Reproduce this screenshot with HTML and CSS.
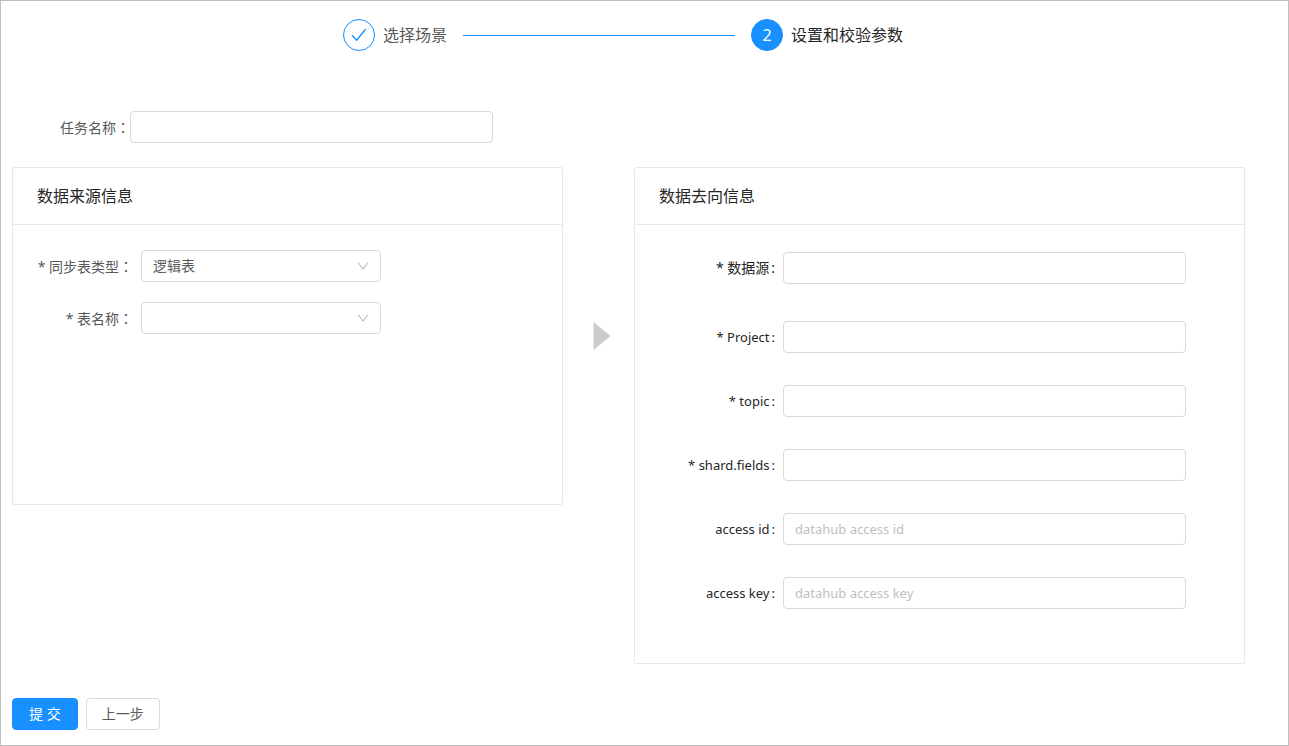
FILE: index.html
```html
<!DOCTYPE html>
<html lang="zh-CN">
<head>
  <meta charset="UTF-8">
  <meta name="viewport" content="width=device-width, initial-scale=1.0">
  <title>设置和校验参数</title>
  <link rel="stylesheet" href="styles.css">
</head>
<body>
  <main class="page">
    <!-- 步骤条 -->
    <ol class="steps">
      <li class="step done">
        <span class="step-icon">
          <svg width="16" height="16" viewBox="0 0 16 16" fill="none" stroke="currentColor" stroke-width="1.4" aria-hidden="true">
            <path d="M1 8.2 L5.6 13.2 L14.6 2.2"/>
          </svg>
        </span>
        <span>选择场景</span>
      </li>
      <li class="step-line" aria-hidden="true"></li>
      <li class="step active">
        <span class="step-icon">2</span>
        <span>设置和校验参数</span>
      </li>
    </ol>

    <form class="task-form">
      <div class="task-name">
        <label for="task-name">任务名称<span class="colon" lang="zh-TW">：</span></label>
        <input class="input" type="text" id="task-name">
      </div>

      <div class="panels">
        <!-- 数据来源 -->
        <section class="panel source">
          <h2>数据来源信息</h2>
          <div class="panel-body">
            <div class="field">
              <label for="table-type">* 同步表类型<span class="colon" lang="zh-TW">：</span></label>
              <div class="select">
                <select id="table-type">
                  <option>逻辑表</option>
                </select>
                <svg width="12" height="8" viewBox="0 0 12 8" fill="none" stroke="currentColor" stroke-width="1.2" aria-hidden="true">
                  <path d="M1 0.5 L6 7 L11 0.5"/>
                </svg>
              </div>
            </div>
            <div class="field">
              <label for="table-name">* 表名称<span class="colon" lang="zh-TW">：</span></label>
              <div class="select">
                <select id="table-name">
                  <option></option>
                </select>
                <svg width="12" height="8" viewBox="0 0 12 8" fill="none" stroke="currentColor" stroke-width="1.2" aria-hidden="true">
                  <path d="M1 0.5 L6 7 L11 0.5"/>
                </svg>
              </div>
            </div>
          </div>
        </section>

        <svg class="arrow" width="18" height="28" viewBox="0 0 18 28" aria-hidden="true">
          <path d="M0.5 0 L17.5 14 L0.5 28 Z" fill="#ccc"/>
        </svg>

        <!-- 数据去向 -->
        <section class="panel target">
          <h2>数据去向信息</h2>
          <div class="panel-body">
            <div class="field first">
              <label for="datasource">* 数据源<span class="mark">:</span></label>
              <input class="input" type="text" id="datasource">
            </div>
            <div class="field">
              <label for="project">* Project<span class="mark">:</span></label>
              <input class="input" type="text" id="project">
            </div>
            <div class="field">
              <label for="topic">* topic<span class="mark">:</span></label>
              <input class="input" type="text" id="topic">
            </div>
            <div class="field">
              <label for="shard-fields">* shard.fields<span class="mark">:</span></label>
              <input class="input" type="text" id="shard-fields">
            </div>
            <div class="field">
              <label for="access-id">access id<span class="mark">:</span></label>
              <input class="input" type="text" id="access-id" placeholder="datahub access id">
            </div>
            <div class="field">
              <label for="access-key">access key<span class="mark">:</span></label>
              <input class="input" type="text" id="access-key" placeholder="datahub access key">
            </div>
          </div>
        </section>
      </div>

      <div class="actions">
        <button class="btn primary" type="submit">提 交</button>
        <button class="btn" type="button">上一步</button>
      </div>
    </form>
  </main>
</body>
</html>
```
FILE: styles.css
```css
* {
  box-sizing: border-box;
}
body {
  margin: 0;
  font-family: "Noto Sans", "Noto Sans CJK SC", sans-serif;
  font-size: 14px;
  line-height: 22px;
  color: #595959;
  background: #fff;
}
input, select, button {
  font: inherit;
  color: inherit;
}
.page {
  min-height: 100vh;
  padding: 18px 43px 15px 0;
  border: 1px solid #bfbfbf;
}

/* 步骤条 */
.steps {
  display: flex;
  align-items: center;
  gap: 16px;
  max-width: 560px;
  margin: 0 auto;
  padding: 0;
  list-style: none;
  font-size: 16px;
}
.step {
  display: flex;
  align-items: center;
  gap: 8px;
  white-space: nowrap;
}
.step-icon {
  display: flex;
  align-items: center;
  justify-content: center;
  width: 32px;
  height: 32px;
  border: 1px solid #1890ff;
  border-radius: 50%;
  color: #1890ff;
}
.step.active {
  color: #262626;
}
.step.active .step-icon {
  background: #1890ff;
  color: #fff;
}
.step-line {
  flex: 1;
  height: 1px;
  background: #1890ff;
}

/* 表单 */
.task-form {
  padding: 60px 0 0 11px;
}
.input,
.select select {
  width: 100%;
  height: 32px;
  padding: 4px 11px;
  border: 1px solid #d9d9d9;
  border-radius: 4px;
  background: #fff;
  outline: none;
}
.input:focus,
.select select:focus {
  border-color: #1890ff;
}
.input::placeholder {
  color: #bfbfbf;
  opacity: 1;
}
/* 全角冒号居中显示 */
.colon {
  font-family: "Noto Sans CJK TC", sans-serif;
}
.mark {
  margin-left: 2px;
}
.task-name {
  display: flex;
  align-items: center;
  padding-left: 48px;
}
.task-name label {
  flex: none;
}
.task-name .input {
  max-width: 363px;
}
.panels {
  display: grid;
  grid-template-columns: 551fr 71px 611fr;
  align-items: start;
  margin-top: 24px;
}
.panel {
  border: 1px solid #e8e8e8;
  border-radius: 2px;
}
.panel h2 {
  margin: 0;
  padding: 16px 24px;
  border-bottom: 1px solid #e8e8e8;
  font-size: 16px;
  font-weight: 400;
  line-height: 24px;
  color: #262626;
}
.source {
  min-height: 338px;
}
.source .panel-body {
  display: grid;
  gap: 20px;
  padding: 25px 24px 24px 0;
}
.target .panel-body {
  display: grid;
  gap: 32px;
  padding: 27px 58px 54px 0;
  font-size: 13px;
  color: #262626;
}
.field {
  display: flex;
  align-items: center;
  gap: 8px;
}
.field label {
  flex: none;
  width: 140px;
  text-align: right;
}
.source .field label {
  width: 120px;
}
.field.first {
  padding-bottom: 5px;
  font-size: 14px;
}
.select {
  position: relative;
  width: 240px;
}
.select select {
  display: block;
  appearance: none;
}
.select svg {
  position: absolute;
  top: 12px;
  right: 12px;
  color: #bfbfbf;
  pointer-events: none;
}
.arrow {
  justify-self: end;
  margin: 155px 23px 0 0;
}

/* 按钮 */
.actions {
  display: flex;
  gap: 8px;
  margin-top: 34px;
}
.btn {
  height: 32px;
  padding: 0 15px;
  border: 1px solid #d9d9d9;
  border-radius: 4px;
  background: #fff;
  cursor: pointer;
}
.btn.primary {
  padding: 0 16px;
  border-color: #1890ff;
  background: #1890ff;
  color: #fff;
}
```
